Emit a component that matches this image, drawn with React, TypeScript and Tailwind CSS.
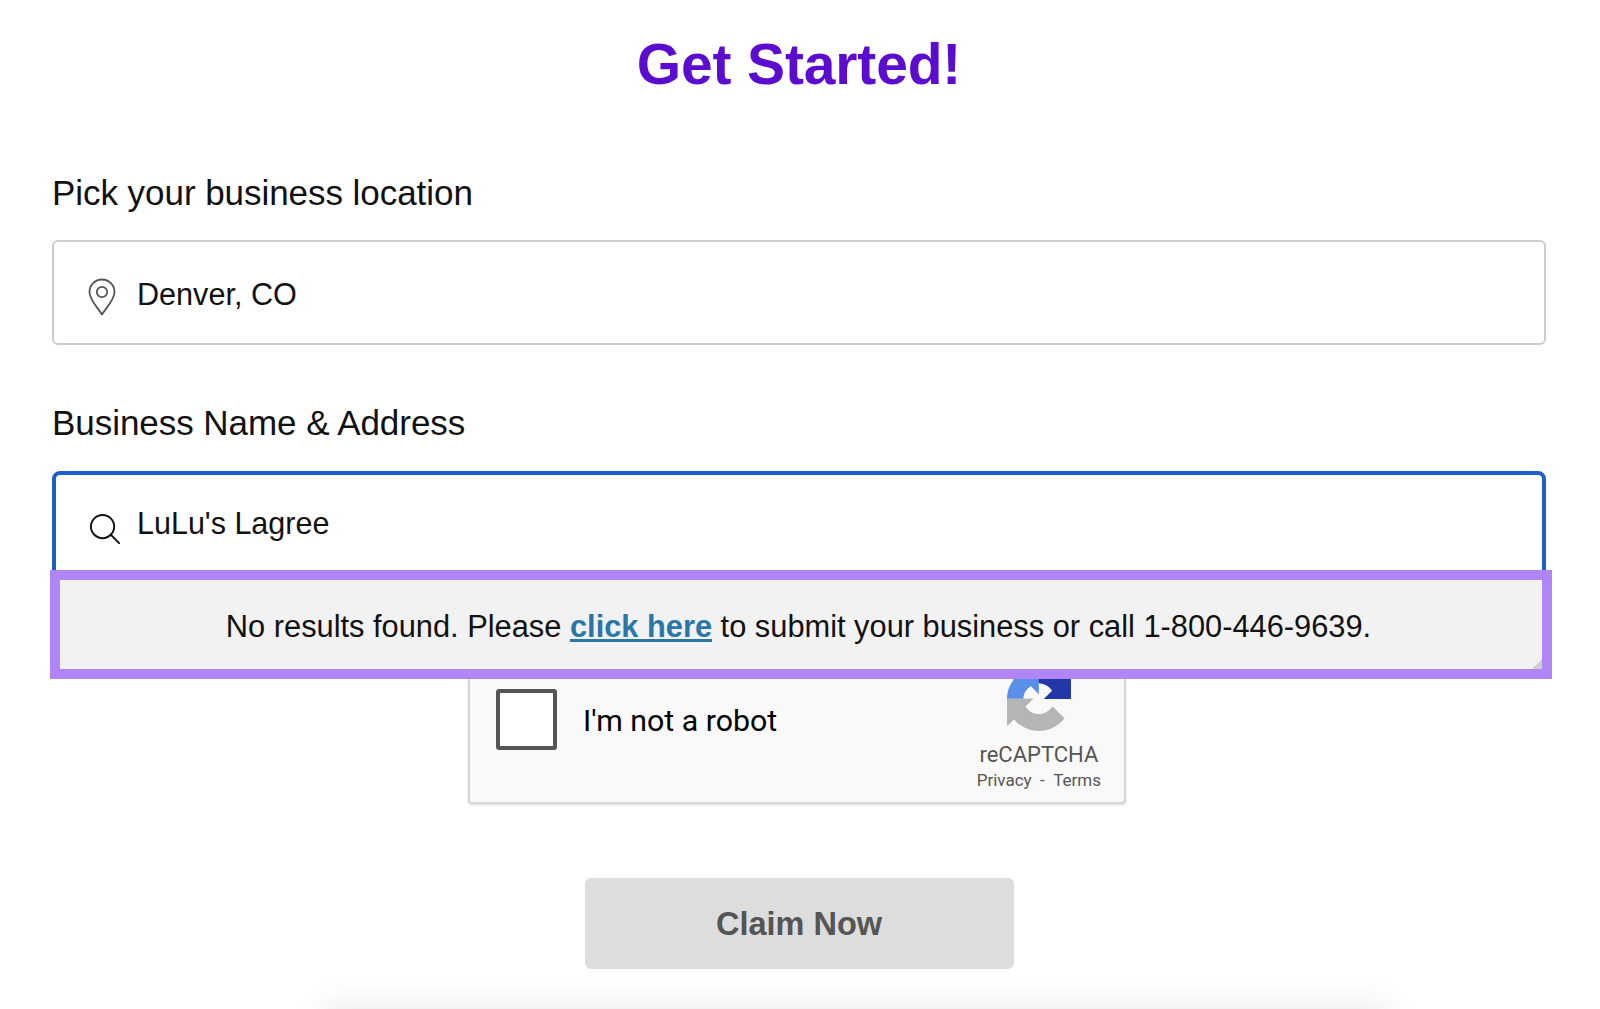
import React from "react";

const sans = "font-['Liberation_Sans',Arial,sans-serif]";
const roboto = "font-['Roboto',Arial,sans-serif]";

const PinIcon = () => (
  <svg width="28" height="38" viewBox="0 0 28 38" fill="none" stroke="#555" strokeWidth="1.8" className="mt-[9px] shrink-0">
    <path d="M14 36.5 C10 30 1.5 22 1.5 14 A12.5 12.5 0 0 1 26.5 14 C26.5 22 18 30 14 36.5 Z" strokeLinejoin="round" />
    <circle cx="14" cy="14" r="5.2" />
  </svg>
);

const SearchIcon = () => (
  <svg width="31" height="31" viewBox="0 0 32 32" fill="none" stroke="#111" strokeWidth="2" className="mt-[4px] shrink-0">
    <circle cx="14" cy="14" r="12" />
    <path d="M22.5 22.5 L31 31" strokeLinecap="square" />
  </svg>
);

const RecaptchaLogo = () => (
  <svg width="64" height="64" viewBox="0 0 64 64" className="mt-[11px]">
    <path fill="#2338a8" d="M64 31.955l-.033-1.37V4.687l-7.16 7.16C50.948 4.674 42.033.093 32.05.093c-10.4 0-19.622 4.96-25.458 12.64l11.738 11.86a15.55 15.55 0 0 1 4.75-5.33c2.05-1.6 4.952-2.91 8.98-2.91.487 0 .863.057 1.14.164 4.993.394 9.32 3.15 11.87 7.149l-8.308 8.31c10.523-.04 22.4-.065 28.233.004" />
    <path fill="#5a90ea" d="M31.862.094l-1.37.033H4.594l7.16 7.16C4.58 13.147 0 22.06 0 32.046c0 10.4 4.96 19.622 12.64 25.458L24.5 45.766a15.55 15.55 0 0 1-5.33-4.75c-1.6-2.05-2.91-4.952-2.91-8.98 0-.487.057-.863.164-1.14.394-4.993 3.15-9.32 7.149-11.87l8.31 8.308c-.04-10.523-.065-22.4.004-28.232" />
    <path fill="#b5b5b5" d="M.001 32.045l.033 1.37v25.898l7.16-7.16c5.86 7.173 14.775 11.754 24.76 11.754 10.4 0 19.621-4.96 25.457-12.64L45.672 39.407a15.55 15.55 0 0 1-5.33 4.75c-2.05 1.6-4.952 2.91-8.98 2.91-.487 0-.863-.057-1.14-.164-4.993-.394-9.32-3.15-11.87-7.149l8.308-8.31c-10.523.04-22.4.065-28.232-.004" />
  </svg>
);

export default function App() {
  return (
    <div className={`${sans} relative h-[1009px] overflow-hidden bg-white pl-[52px] pr-[54px] text-[#111]`}>
      <h1 className="pt-[29px] pb-[1px] text-center text-[57px] font-bold leading-[70px] tracking-[-0.15px] text-[#5b0ccf]">
        Get Started!
      </h1>

      <div className="mt-[73px] text-[35px] leading-[40px] tracking-[-0.05px]">Pick your business location</div>
      <div className="mt-[27px] flex h-[105px] items-center gap-[21px] rounded-[6px] border-2 border-[#cdcdcd] pl-[34px] text-[30.6px]">
        <PinIcon />
        <span className="mt-[4px]">Denver, CO</span>
      </div>

      <div className="mt-[58px] text-[35px] leading-[40px] tracking-[-0.05px]">Business Name &amp; Address</div>
      <div className="mt-[28px] flex h-[110px] items-center gap-[17px] rounded-[8px] border-[4px] border-[#1f5fc8] pl-[33px] text-[30.5px]">
        <SearchIcon />
        <span className="mb-[4px]">LuLu's Lagree</span>
      </div>

      {/* highlight sits over the input bottom and the captcha top */}
      <div className="relative z-10 mt-[-11px] ml-[-2px] mr-[-6px] flex h-[109px] items-center justify-center border-[10px] border-[#b085f5] bg-[#f2f2f2] text-[30.8px]">
        <span className="mr-[5px] mt-[6px]">
          No results found. Please{" "}
          <a className="font-bold text-[#2b76a8] underline">click here</a> to submit your business or call 1-800-446-9639.
        </span>
        <svg width="10" height="10" viewBox="0 0 10 10" className="absolute bottom-0 right-0">
          <path d="M10 0 L10 10 L0 10 Z" fill="#cfcfcf" />
        </svg>
      </div>

      <div className="mt-[-25px] ml-[416px] flex h-[150px] w-[658px] items-center justify-between rounded-[4px] border-2 border-[#d6d6d6] bg-[#f9f9f9] pl-[26px] pr-[23px] shadow-[0_1px_2px_rgba(0,0,0,0.15)]">
        <div className={`${roboto} mb-[20px] flex items-center gap-[26px]`}>
          <div className="h-[61px] w-[61px] rounded-[3px] border-[4px] border-[#555] bg-white" />
          <span className="mt-[4px] text-[30.3px] text-black">I'm not a robot</span>
        </div>
        <div className={`${roboto} flex flex-col items-center self-start text-[#555]`}>
          <RecaptchaLogo />
          <div className="mt-[9px] text-[22px] leading-[30px]">reCAPTCHA</div>
          <div className="mt-[-1px] text-[17px] leading-[22px]">Privacy&nbsp; - &nbsp;Terms</div>
        </div>
      </div>

      <button className="mx-auto mt-[74px] block h-[91px] w-[429px] rounded-[6px] bg-[#dddddd] pt-[2px] text-[32.5px] font-bold text-[#555]">
        Claim Now
      </button>

      <div className="absolute left-[340px] top-[1024px] h-[40px] w-[1030px] bg-[#eee] shadow-[0_0_36px_16px_rgba(0,0,0,0.1)]" />
    </div>
  );
}
